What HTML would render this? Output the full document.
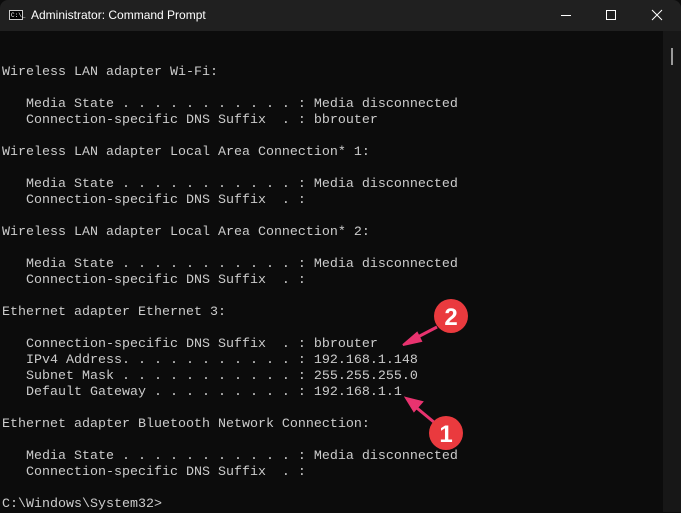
<!DOCTYPE html>
<html><head><style>
html,body{margin:0;padding:0;background:#0c0c0c;width:681px;height:512px;overflow:hidden}
.tb{position:absolute;left:0;top:0;width:681px;height:31px;background:#202020;border-radius:8px 8px 0 0}
.tt{position:absolute;left:31px;top:8px;font:12px "Liberation Sans",sans-serif;color:#fff}
.ic{position:absolute;left:9px;top:10px;width:14px;height:10px;border:1px solid #ccc;background:#000;font:6px "Liberation Mono",monospace;color:#fff;line-height:10px;box-sizing:border-box;padding-left:1px}
pre{position:absolute;left:2px;top:65px;margin:0;font:13.33px/16px "Liberation Mono",monospace;color:#cccccc}
.sb{position:absolute;left:663px;top:31px;width:18px;height:481px;background:#171717}
.th{position:absolute;left:671px;top:48px;width:2px;height:17px;background:#9a9a9a}
</style></head><body>
<div class="tb"></div>
<div class="ic">C:\_</div>
<div class="tt">Administrator: Command Prompt</div>
<svg style="position:absolute;left:540px;top:0" width="141" height="31">
<line x1="21" y1="15.5" x2="31" y2="15.5" stroke="#fff" stroke-width="1"/>
<rect x="66.5" y="10.5" width="9" height="9" fill="none" stroke="#fff" stroke-width="1"/>
<path d="M112 10L122 20M122 10L112 20" stroke="#fff" stroke-width="1"/>
</svg>
<div class="sb"></div><div class="th"></div>
<pre>Wireless LAN adapter Wi-Fi:

   Media State . . . . . . . . . . . : Media disconnected
   Connection-specific DNS Suffix  . : bbrouter

Wireless LAN adapter Local Area Connection* 1:

   Media State . . . . . . . . . . . : Media disconnected
   Connection-specific DNS Suffix  . :

Wireless LAN adapter Local Area Connection* 2:

   Media State . . . . . . . . . . . : Media disconnected
   Connection-specific DNS Suffix  . :

Ethernet adapter Ethernet 3:

   Connection-specific DNS Suffix  . : bbrouter
   IPv4 Address. . . . . . . . . . . : 192.168.1.148
   Subnet Mask . . . . . . . . . . . : 255.255.255.0
   Default Gateway . . . . . . . . . : 192.168.1.1

Ethernet adapter Bluetooth Network Connection:

   Media State . . . . . . . . . . . : Media disconnected
   Connection-specific DNS Suffix  . :

C:\Windows\System32&gt;</pre>
<svg style="position:absolute;left:0;top:0" width="681" height="512">
<path d="M437 327L412 340" stroke="#e8336f" stroke-width="3"/>
<path d="M403 345L417 333L421 341Z" fill="#e8336f" stroke="#e8336f" stroke-width="2"/>
<circle cx="451" cy="316" r="17" fill="#ea3a3e"/>
<text x="451" y="325" text-anchor="middle" font-family="Liberation Sans" font-weight="bold" font-size="24" fill="#fff">2</text>
<path d="M435 423L412 404" stroke="#e8336f" stroke-width="3"/>
<path d="M406 398L422 402L414 411Z" fill="#e8336f" stroke="#e8336f" stroke-width="2"/>
<circle cx="446" cy="433" r="17" fill="#ea3a3e"/>
<text x="446" y="442" text-anchor="middle" font-family="Liberation Sans" font-weight="bold" font-size="24" fill="#fff">1</text>
</svg>
</body></html>
